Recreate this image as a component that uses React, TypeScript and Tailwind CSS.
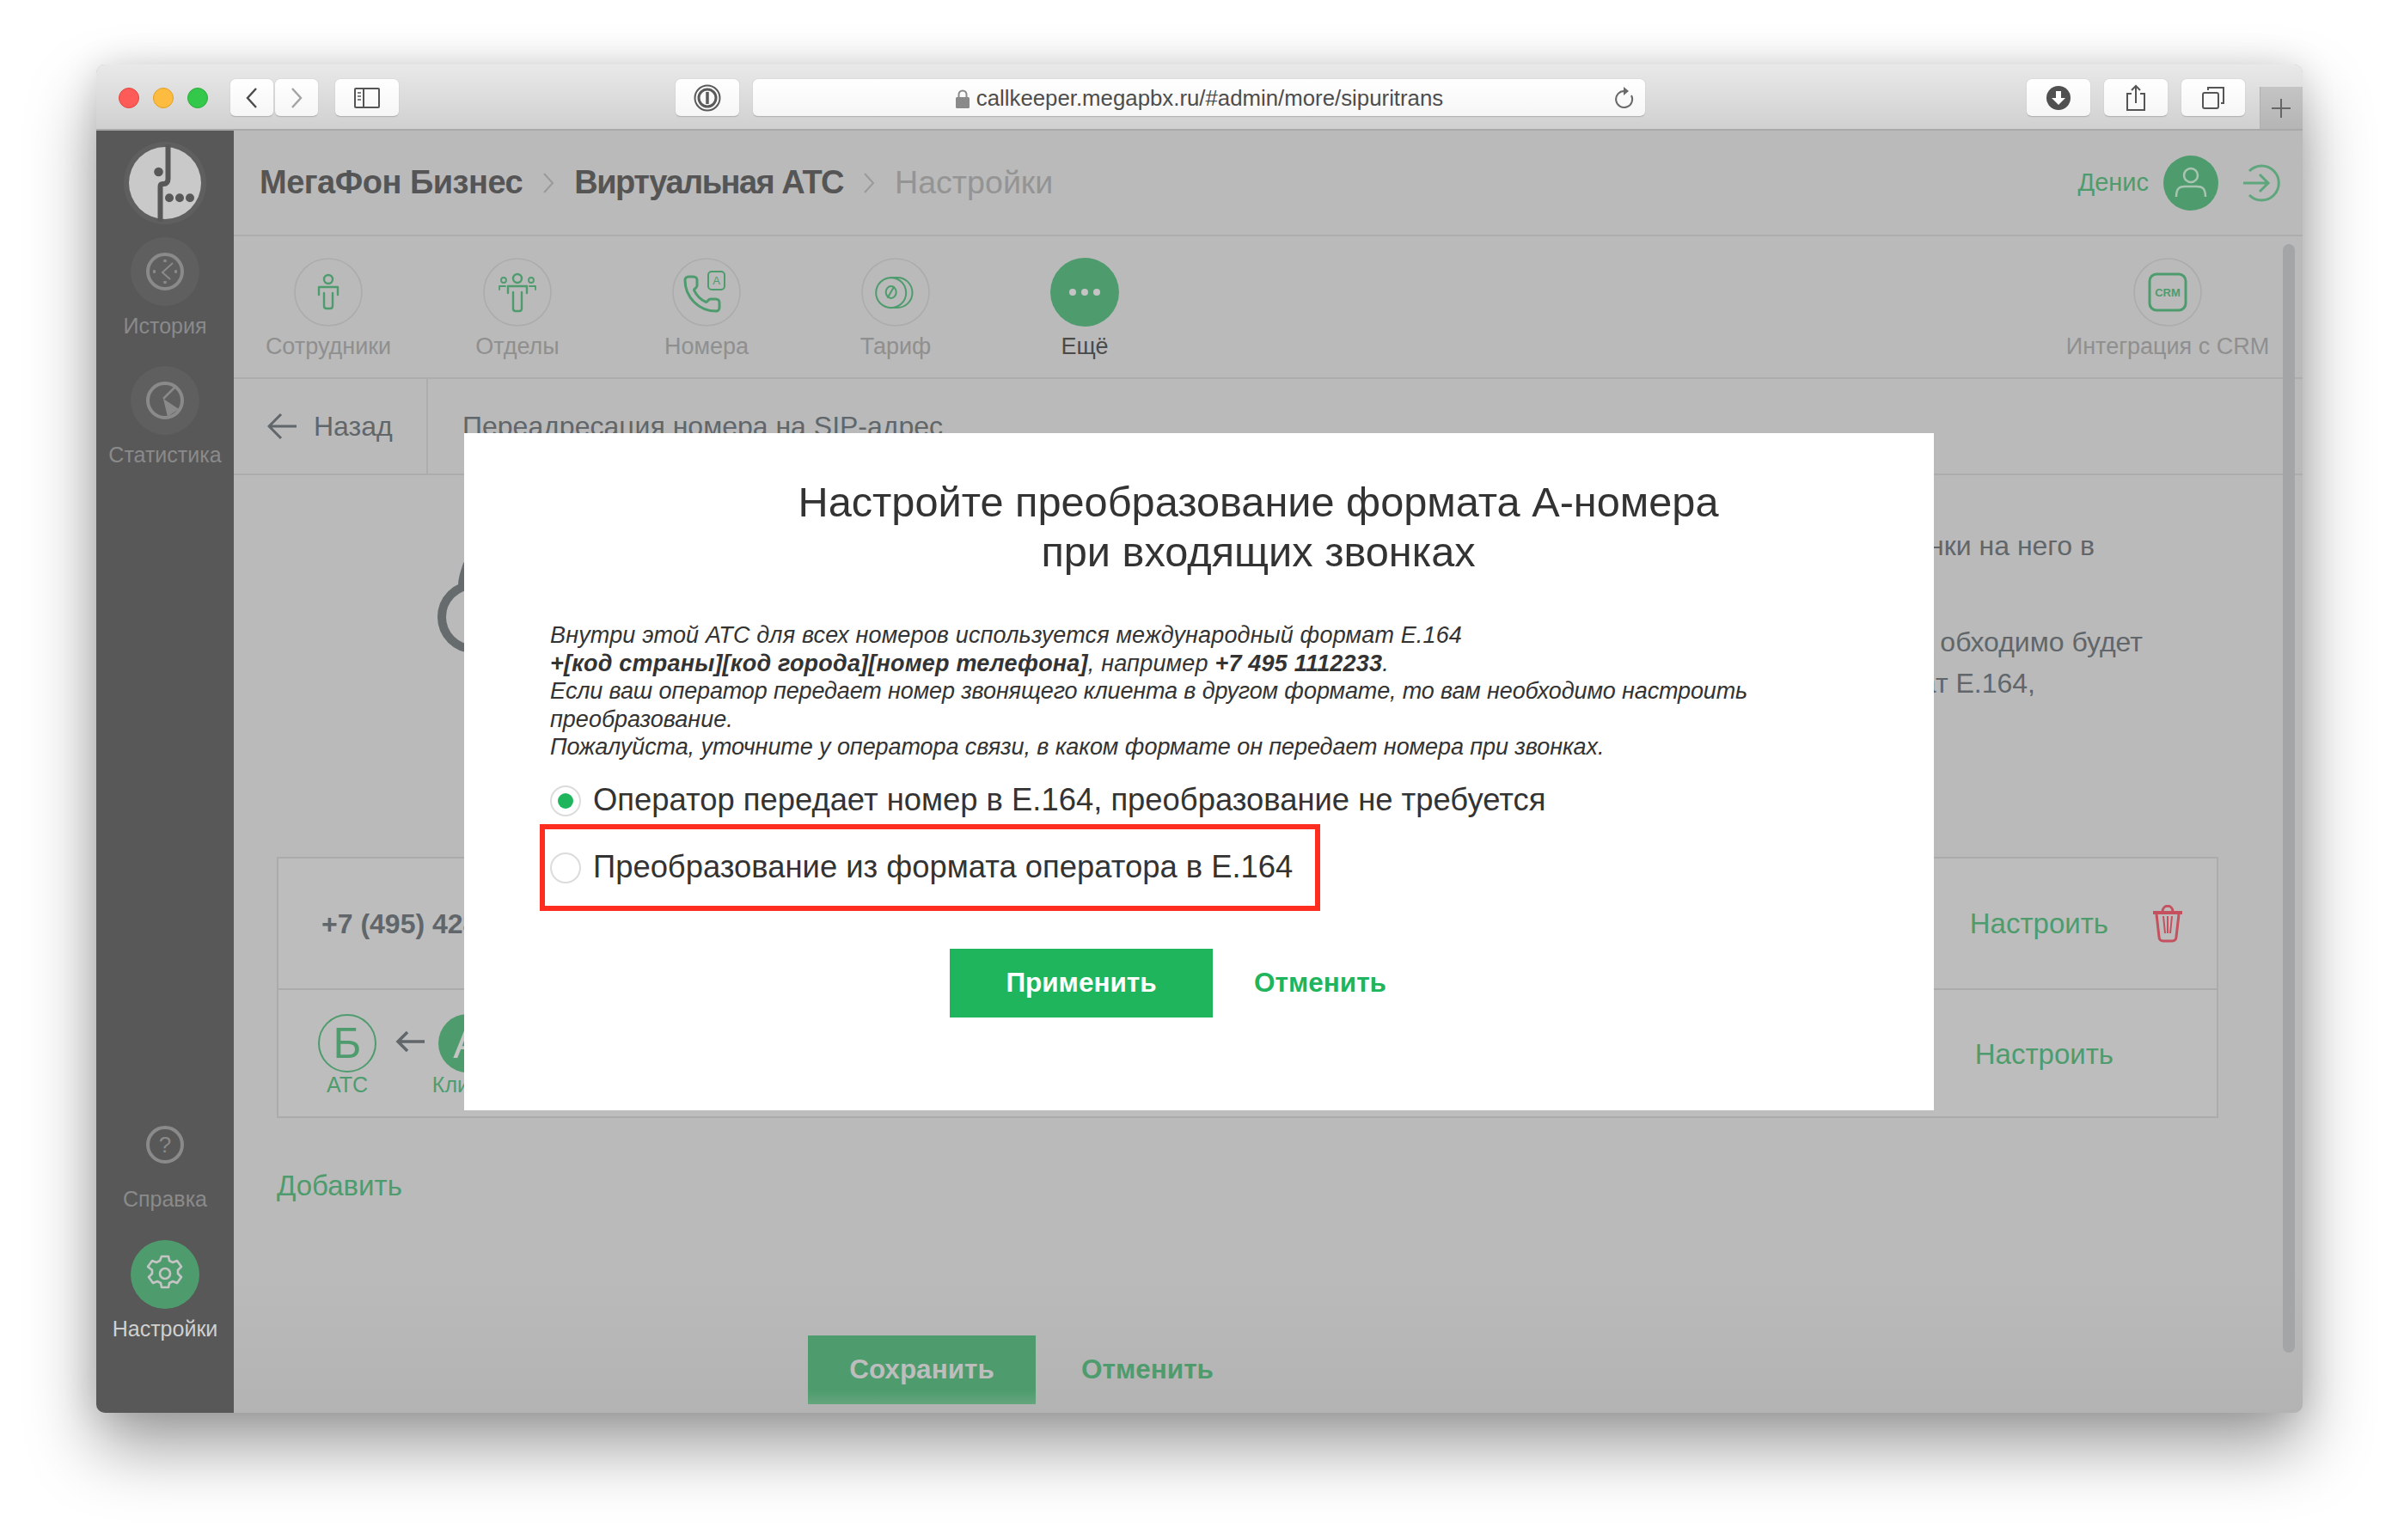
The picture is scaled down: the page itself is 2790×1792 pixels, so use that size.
import React from "react";
import { Phone } from "lucide-react";

const G = "#4e9c6d";

function Btn({ w, className = "", children }: { w: string; className?: string; children?: React.ReactNode }) {
  return (
    <div className={`${w} h-[44px] rounded-[6px] bg-gradient-to-b from-white to-[#f6f6f6] border-b border-[#b4b4b4] shadow-[0_0_1px_rgba(0,0,0,0.3)] flex items-center justify-center ${className}`}>
      {children}
    </div>
  );
}

function Toolbar() {
  return (
    <div className="relative h-[77px] shrink-0 bg-gradient-to-b from-[#e9e9e9] to-[#d0d0d0] border-b-2 border-[#a9a9a9] flex items-start pt-[17px] pl-[26px]">
      <div className="flex gap-[16px] mt-[10px]">
        <div className="w-[24px] h-[24px] rounded-full bg-[#fc5b57] border border-[#e2463f]" />
        <div className="w-[24px] h-[24px] rounded-full bg-[#fdbc40] border border-[#dfa123]" />
        <div className="w-[24px] h-[24px] rounded-full bg-[#34c84a] border border-[#2bac3b]" />
      </div>
      <Btn w="w-[50px]" className="ml-[26px]">
        <svg width="18" height="26" viewBox="0 0 18 26" fill="none" stroke="#4a4a4a" strokeWidth="2.4"><path d="M14 2 4 13l10 11" /></svg>
      </Btn>
      <Btn w="w-[50px]" className="ml-[2px]">
        <svg width="18" height="26" viewBox="0 0 18 26" fill="none" stroke="#a3a3a3" strokeWidth="2.4"><path d="M4 2l10 11L4 24" /></svg>
      </Btn>
      <Btn w="w-[74px]" className="ml-[20px]">
        <svg width="30" height="24" viewBox="0 0 30 24" fill="none" stroke="#555" strokeWidth="2"><rect x="1" y="1" width="28" height="22" rx="1" /><path d="M11 1v22" /><path d="M4 6h4M4 10h4M4 14h4" strokeWidth="1.5" /></svg>
      </Btn>
      <Btn w="w-[74px]" className="ml-[322px]">
        <svg width="32" height="32" viewBox="0 0 32 32" fill="none" stroke="#5a5a5a"><circle cx="16" cy="16" r="14.5" strokeWidth="2" /><circle cx="16" cy="16" r="10" strokeWidth="3" /><path d="M16 9v14" strokeWidth="3.5" /></svg>
      </Btn>
      <Btn w="w-[1038px]" className="ml-[16px] relative">
        <div className="flex items-center gap-[7px] text-[25.8px] text-[#4d4d4d] pt-[2px]">
          <svg width="18" height="24" viewBox="0 0 18 24"><path d="M4.5 11V7a4.5 4.5 0 0 1 9 0v4" fill="none" stroke="#8a8a8a" strokeWidth="2" /><rect x="1" y="10" width="16" height="13" rx="1.5" fill="#8a8a8a" /></svg>
          <span>callkeeper.megapbx.ru/#admin/more/sipuritrans</span>
        </div>
        <svg className="absolute right-[12px] top-[8px]" width="26" height="28" viewBox="0 0 26 28" fill="none" stroke="#6a6a6a" strokeWidth="2"><path d="M14 6a9.5 9.5 0 1 0 8 5" /><path d="M13 1l6 5-6 5z" fill="#6a6a6a" stroke="none" /></svg>
      </Btn>
      <Btn w="w-[74px]" className="ml-[444px]">
        <svg width="28" height="28" viewBox="0 0 28 28"><circle cx="14" cy="14" r="14" fill="#505050" /><path d="M11 6h6v8h5l-8 8-8-8h5z" fill="#fff" /></svg>
      </Btn>
      <Btn w="w-[74px]" className="ml-[16px]">
        <svg width="24" height="32" viewBox="0 0 24 32" fill="none" stroke="#555" strokeWidth="2"><path d="M7 11H2v19h20V11h-5" /><path d="M12 22V2M7 7l5-5 5 5" /></svg>
      </Btn>
      <Btn w="w-[74px]" className="ml-[16px]">
        <svg width="26" height="26" viewBox="0 0 26 26" fill="none" stroke="#555" strokeWidth="2"><rect x="1" y="7" width="18" height="18" rx="2" /><path d="M7 4V1h18v18h-3" /></svg>
      </Btn>
      <div className="absolute right-0 bottom-0 w-[50px] h-[49px] bg-gradient-to-b from-[#c4c4c4] to-[#b5b5b5] flex items-center justify-center border-l border-[#b0b0b0] pr-[2px]">
        <svg width="24" height="24" viewBox="0 0 24 24" stroke="#666" strokeWidth="2"><path d="M12 1v22M1 12h22" /></svg>
      </div>
    </div>
  );
}

function Logo() {
  return (
    <svg width="96" height="96" viewBox="0 0 96 96" className="block">
      <circle cx="48" cy="48" r="48" fill="#5f5f5f" />
      <circle cx="48" cy="48" r="42" fill="#c9c9c9" />
      <path d="M51.5 3v40c0 4-2 6-5 6h-1c-2 0-3 1-3 3v41" fill="none" stroke="#585858" strokeWidth="6" />
      <circle cx="40.5" cy="35" r="5.3" fill="#585858" />
      <circle cx="53" cy="65.3" r="5" fill="#585858" />
      <circle cx="65" cy="65.3" r="5" fill="#585858" />
      <circle cx="77" cy="65.3" r="5" fill="#585858" />
    </svg>
  );
}

function Halo({ children, bg = "bg-[#5f5f5f]" }: { children: React.ReactNode; bg?: string }) {
  return <div className={`w-[80px] h-[80px] rounded-full ${bg} flex items-center justify-center`}>{children}</div>;
}

function Sidebar() {
  const label = "text-[25px] leading-[32px] whitespace-nowrap";
  return (
    <div className="w-[160px] shrink-0 bg-[#585858] flex flex-col items-center pt-[13px] pb-[82px] rounded-bl-[10px]">
      <Logo />
      <div className="mt-[15px]">
        <Halo>
          <svg width="46" height="46" viewBox="0 0 46 46" fill="none" stroke="#8a8a8a">
            <circle cx="23" cy="23" r="20" strokeWidth="4" />
            <path d="M32 13 20 24l9 8" strokeWidth="2" />
            <path d="M23 9v3M23 34v3M9 23h3M34 23h3" strokeWidth="3.5" />
          </svg>
        </Halo>
      </div>
      <div className={`mt-[7px] text-[#8a8a8a] ${label}`}>История</div>
      <div className="mt-[31px]">
        <Halo>
          <svg width="46" height="46" viewBox="0 0 46 46" fill="none" stroke="#8a8a8a">
            <circle cx="23" cy="23" r="20" strokeWidth="4" />
            <path d="M21 21 34 8" strokeWidth="2.5" />
            <path d="M21 21l5 21 13-9z" fill="#8a8a8a" stroke="none" />
          </svg>
        </Halo>
      </div>
      <div className={`mt-[7px] text-[#8a8a8a] ${label}`}>Статистика</div>
      <div className="mt-auto">
        <Halo bg="bg-transparent">
          <div className="w-[44px] h-[44px] rounded-full border-[4px] border-[#8a8a8a] flex items-center justify-center text-[26px] leading-none text-[#8a8a8a]">?</div>
        </Halo>
      </div>
      <div className={`mt-[7px] text-[#8a8a8a] ${label}`}>Справка</div>
      <div className="mt-[32px]">
        <Halo bg="bg-[#4e9c6d]">
          <svg width="46" height="46" viewBox="0 0 46 46" fill="none" stroke="#c4c4c4" strokeWidth="2.6" strokeLinejoin="round">
            <path d="M19 2h8l1 5 4 2 5-2 5 7-4 4v4l4 4-5 7-5-2-4 2-1 5h-8l-1-5-4-2-5 2-5-7 4-4v-4L3 14l5-7 5 2 4-2z" />
            <circle cx="23" cy="22" r="6" />
          </svg>
        </Halo>
      </div>
      <div className={`mt-[7px] text-[#d0d0d0] ${label}`}>Настройки</div>
    </div>
  );
}

function Chevron() {
  return (
    <svg width="16" height="26" viewBox="0 0 16 26" fill="none" stroke="#9a9a9a" strokeWidth="2" className="mx-[22px]"><path d="M3 2l10 11L3 24" /></svg>
  );
}

function Header() {
  return (
    <div className="h-[123px] shrink-0 border-b-2 border-[#adadad] flex items-center pl-[30px] pr-[25px]">
      <span className="text-[38px] font-bold text-[#555555] tracking-[-0.5px] whitespace-nowrap">МегаФон Бизнес</span>
      <Chevron />
      <span className="text-[38px] font-bold text-[#555555] tracking-[-1.5px] whitespace-nowrap">Виртуальная АТС</span>
      <Chevron />
      <span className="text-[37.6px] text-[#949494] whitespace-nowrap">Настройки</span>
      <span className="ml-auto text-[29px] text-[#4e9c6d]">Денис</span>
      <div className="ml-[17px] w-[64px] h-[64px] rounded-full bg-[#4e9c6d] flex items-center justify-center">
        <svg width="40" height="40" viewBox="0 0 40 40" fill="none" stroke="#a9c4b2" strokeWidth="2.5"><circle cx="20" cy="11" r="8" /><path d="M3 36c0-11 5-12 10-12h14c5 0 10 1 10 12" /></svg>
      </div>
      <svg width="44" height="44" viewBox="0 0 44 44" fill="none" stroke="#5ea67b" strokeWidth="3" className="ml-[29px]">
        <path d="M7 8a20 20 0 1 1 0 28" /><path d="M0 22h28M19 12l10 10-10 10" />
      </svg>
    </div>
  );
}

function TabCircle({ children }: { children: React.ReactNode }) {
  return (
    <svg width="80" height="80" viewBox="0 0 80 80" fill="none" stroke={G} strokeWidth="2.4" strokeLinejoin="round" strokeLinecap="round">
      <circle cx="40" cy="40" r="39" stroke="#acacac" strokeWidth="1.6" />
      {children}
    </svg>
  );
}

function Tab({ icon, label, active }: { icon: React.ReactNode; label: string; active?: boolean }) {
  return (
    <div className="w-[220px] flex flex-col items-center pt-[25px]">
      {icon}
      <div className={`mt-[6px] text-[27px] leading-[34px] whitespace-nowrap ${active ? "text-[#4a4a4a]" : "text-[#8f8f8f]"}`}>{label}</div>
    </div>
  );
}

function Tabs() {
  return (
    <div className="h-[166px] shrink-0 border-b-2 border-[#adadad] flex justify-between pr-[47px]">
      <div className="flex">
        <Tab label="Сотрудники" icon={
          <TabCircle>
            <circle cx="40" cy="25" r="5" /><path d="M29 43v-9h22v9" /><path d="M35 41v15c0 2 1 3 3 3h4c2 0 3-1 3-3V41" />
          </TabCircle>} />
        <Tab label="Отделы" icon={
          <TabCircle>
            <circle cx="40" cy="24" r="5" /><circle cx="24" cy="26" r="3" strokeWidth="1.8" /><circle cx="56" cy="26" r="3" strokeWidth="1.8" />
            <path d="M29 41v-8h22v8" /><path d="M35 40v19c0 2 1 3 3 3h4c2 0 3-1 3-3V40" />
            <path d="M19 37v-4h7M61 37v-4h-7" strokeWidth="1.8" />
          </TabCircle>} />
        <Tab label="Номера" icon={
          <TabCircle>
            <Phone x={11} y={18} width={48} height={48} strokeWidth={1.5} stroke={G} />
            <rect x="42" y="16" width="19" height="21" rx="4" fill="#bababa" strokeWidth="2" />
            <text x="51.5" y="31" textAnchor="middle" fontSize="13" fill={G} stroke="none" fontFamily="Liberation Sans">A</text>
          </TabCircle>} />
        <Tab label="Тариф" icon={
          <TabCircle>
            <circle cx="34.7" cy="40.7" r="17.5" strokeWidth="2" />
            <path d="M34 23h8a17.5 17.5 0 0 1 0 35h-8" strokeWidth="2" />
            <ellipse cx="34.7" cy="40" rx="6" ry="7" strokeWidth="2" />
            <path d="M31 46l7-12" strokeWidth="2" />
          </TabCircle>} />
        <Tab label="Ещё" active icon={
          <svg width="80" height="80" viewBox="0 0 80 80">
            <circle cx="40" cy="40" r="40" fill={G} />
            <circle cx="26" cy="40" r="4" fill="#c4c4c4" /><circle cx="40" cy="40" r="4" fill="#c4c4c4" /><circle cx="54" cy="40" r="4" fill="#c4c4c4" />
          </svg>} />
      </div>
      <Tab label="Интеграция с CRM" icon={
        <TabCircle>
          <rect x="19" y="19" width="42" height="42" rx="8" strokeWidth="3" />
          <text x="40" y="45" textAnchor="middle" fontSize="13" fontWeight="700" fill={G} stroke="none" fontFamily="Liberation Sans">CRM</text>
        </TabCircle>} />
    </div>
  );
}

function BackRow() {
  return (
    <div className="h-[112px] shrink-0 border-b-2 border-[#adadad] flex items-center">
      <div className="w-[226px] h-full border-r-2 border-[#adadad] flex items-center pl-[39px] gap-[20px]">
        <svg width="34" height="32" viewBox="0 0 34 32" fill="none" stroke="#60666a" strokeWidth="3"><path d="M34 16H3M16 2 2 16l14 14" /></svg>
        <span className="text-[32px] text-[#60666a]">Назад</span>
      </div>
      <span className="ml-[40px] text-[32px] text-[#60666a] whitespace-nowrap">Переадресация номера на SIP-адрес</span>
    </div>
  );
}

function Body() {
  const link = "text-[33px] text-[#4e9c6d] whitespace-nowrap";
  return (
    <div className="flex-1 flex flex-col bg-gradient-to-b from-[#bababa] from-[85%] to-[#b3b3b3]">
      <div className="h-[444px] shrink-0 flex justify-between">
        <svg width="90" height="100" viewBox="0 0 90 100" fill="none" stroke="#666b6e" strokeWidth="10" className="ml-[234px] mt-[115px] overflow-visible">
          <circle cx="45" cy="50" r="37" />
          <path d="M32 14c0-8 2-14 6-26" />
        </svg>
        <div className="flex flex-col items-end pt-[58px] text-[32px] leading-[48px] text-[#60666a] whitespace-nowrap">
          <div className="mr-[242px]">нки на него в</div>
          <div className="mr-[186px] mt-[64px]">обходимо будет</div>
          <div className="mr-[311px]">ат Е.164,</div>
        </div>
      </div>
      <div className="ml-[50px] mr-[98px] h-[304px] shrink-0 bg-[#bdbdbd] border-2 border-[#ababab] flex flex-col">
        <div className="h-[153px] border-b-2 border-[#ababab] flex items-center pl-[50px] pr-[40px]">
          <span className="text-[32px] font-bold text-[#60666a]">+7 (495) 428</span>
          <span className={`ml-auto ${link}`}>Настроить</span>
          <svg width="34" height="44" viewBox="0 0 34 44" fill="none" stroke="#c5505e" strokeWidth="3" className="ml-[52px]">
            <path d="M0 9h34" strokeWidth="4" /><path d="M11 8c0-9 12-9 12 0" />
            <path d="M4 11l3 26c0 3 2 5 5 5h10c3 0 5-2 5-5l3-26" /><path d="M12 13l2 20M17 13v20M22 13l-2 20" strokeWidth="2" />
          </svg>
        </div>
        <div className="flex-1 flex items-start pl-[46px] pr-[120px]">
          <div className="flex flex-col items-center w-[68px] mt-[28px]">
            <div className="w-[68px] h-[68px] rounded-full border-2 border-[#4e9c6d] flex items-center justify-center text-[50px] leading-none text-[#4e9c6d]">Б</div>
            <div className="text-[25px] leading-[30px] text-[#4e9c6d] -mt-[1px]">АТС</div>
          </div>
          <svg width="34" height="26" viewBox="0 0 34 26" fill="none" stroke="#60666a" strokeWidth="3.5" className="ml-[22px] mt-[47px]"><path d="M34 13H3M14 2 3 13l11 11" /></svg>
          <div className="flex flex-col items-center w-[68px] ml-[16px] mt-[28px]">
            <div className="w-[68px] h-[68px] rounded-full bg-[#4e9c6d] flex items-center justify-center text-[50px] leading-none text-[#c4c4c4]">А</div>
            <div className="text-[25px] leading-[30px] text-[#4e9c6d] -mt-[1px] whitespace-nowrap">Клиент</div>
          </div>
          <span className={`ml-auto mt-[50px] ${link}`}>Настроить</span>
        </div>
      </div>
      <div className={`ml-[50px] mt-[59px] leading-[40px] ${link}`}>Добавить</div>
      <div className="flex items-center ml-[668px] mt-[154px]">
        <div className="w-[265px] h-[80px] bg-[linear-gradient(#4e9c6d_80%,#65a57e)] flex items-center justify-center text-[31.5px] font-bold text-[#bdbdbd]">Сохранить</div>
        <span className="ml-[53px] text-[31.5px] font-bold text-[#4e9c6d]">Отменить</span>
      </div>
    </div>
  );
}

function Radio({ checked, label }: { checked?: boolean; label: string }) {
  return (
    <div className="h-[78px] flex items-center pl-[100px]">
      <div className="w-[36px] h-[36px] rounded-full border-2 border-[#dcdcdc] flex items-center justify-center">
        {checked && <div className="w-[18px] h-[18px] rounded-full bg-[#1eb55c]" />}
      </div>
      <span className="ml-[14px] text-[36.4px] text-[#333333] whitespace-nowrap">{label}</span>
    </div>
  );
}

function Modal() {
  return (
    <div className="absolute left-[428px] top-[429px] w-[1710px] h-[788px] bg-white flex flex-col pt-[51px]">
      <div className="pl-[138px] text-center text-[48.7px] leading-[58px] text-[#333333]">
        <div>Настройте преобразование формата А-номера</div>
        <div>при входящих звонках</div>
      </div>
      <div className="mt-[52px] ml-[100px] text-[27px] leading-[32.5px] italic text-[#333333] whitespace-nowrap">
        <div className="tracking-[0.15px]">Внутри этой АТС для всех номеров используется международный формат Е.164</div>
        <div className="tracking-[0.2px]"><b>+[код страны][код города][номер телефона]</b>, например <b>+7 495 1112233</b>.</div>
        <div className="tracking-[-0.13px]">Если ваш оператор передает номер звонящего клиента в другом формате, то вам необходимо настроить</div>
        <div>преобразование.</div>
        <div className="tracking-[-0.08px]">Пожалуйста, уточните у оператора связи, в каком формате он передает номера при звонках.</div>
      </div>
      <div className="mt-[7px]">
        <Radio checked label="Оператор передает номер в Е.164, преобразование не требуется" />
        <Radio label="Преобразование из формата оператора в Е.164" />
      </div>
      <div className="mt-[55px] ml-[565px] flex items-center">
        <div className="w-[306px] h-[80px] bg-[#1eb55c] flex items-center justify-center text-[31.5px] font-bold text-white">Применить</div>
        <span className="ml-[48px] text-[31.5px] font-bold text-[#1eb55c]">Отменить</span>
      </div>
      <div className="absolute left-[88px] top-[455px] w-[908px] h-[101px] border-[6px] border-[#ff2d20]" />
    </div>
  );
}

export default function App() {
  return (
    <div className="w-[2790px] h-[1792px] bg-white pt-[75px] pl-[112px] overflow-hidden [font-family:'Liberation_Sans',Arial,sans-serif]">
      <div className="relative w-[2567px] h-[1569px] rounded-[10px] shadow-[0_40px_80px_rgba(0,0,0,0.38),0_0_40px_rgba(0,0,0,0.12)] flex flex-col bg-[#bababa]">
        <div className="rounded-t-[10px] overflow-hidden"><Toolbar /></div>
        <div className="flex-1 flex min-h-0">
          <Sidebar />
          <div className="flex-1 flex flex-col min-w-0 rounded-br-[10px] overflow-hidden">
            <Header />
            <Tabs />
            <BackRow />
            <Body />
          </div>
        </div>
        <div className="absolute left-[2544px] top-[209px] w-[14px] h-[1290px] rounded-full bg-[#a4a5a6]" />
        <Modal />
      </div>
    </div>
  );
}
